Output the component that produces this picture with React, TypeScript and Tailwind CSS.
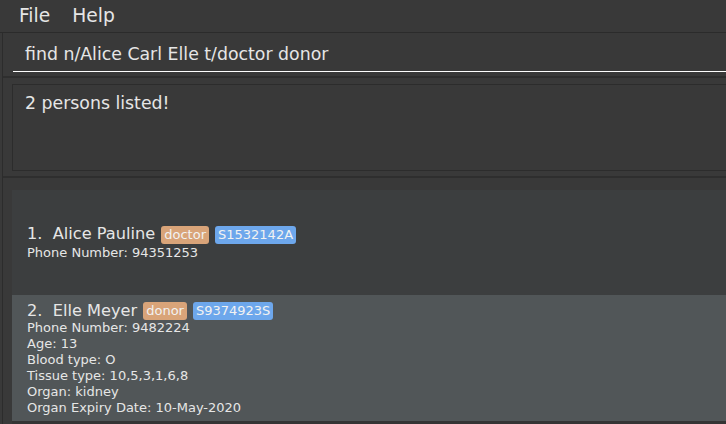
import React from "react";

const font = { fontFamily: '"DejaVu Sans", Verdana, sans-serif' };

function Tag({ text, color }: { text: string; color: "orange" | "blue" }) {
  return (
    <span
      className={
        "px-[3px] rounded-[3px] text-[13px] leading-[18px] text-[#f2f2f2] " +
        (color === "orange" ? "bg-[#d9a479]" : "bg-[#6da7ec]")
      }
    >
      {text}
    </span>
  );
}

export default function App() {
  return (
    <div
      className="w-[726px] h-[424px] overflow-hidden bg-[#393939] text-[#e6e6e6] flex flex-col"
      style={font}
    >
      {/* Menu bar */}
      <div className="h-[33px] shrink-0 flex items-center gap-[22px] px-[19px] text-[18.67px] border-b border-[#2b2b2b]">
        <span>File</span>
        <span>Help</span>
      </div>

      <div className="flex-1 flex flex-col ml-[2px] border-l border-[#2c2c2c]">
        {/* Command box */}
        <div className="h-[45px] shrink-0 pl-[10px] pt-[5px] border-b-[2px] border-[#2e2e2e]">
          <div className="h-[34px] border-b border-white flex items-center pl-[12px] text-[17.33px]">
            find n/Alice Carl Elle t/doctor donor
          </div>
        </div>

        {/* Result display */}
        <div className="h-[100px] shrink-0 pl-[9px] pt-[6px] pb-[6px] border-b-[2px] border-[#2e2e2e]">
          <div className="h-[87px] border border-[#2c2c2c] border-r-0 pl-[12px] pt-[6px] text-[17.33px]">
            2 persons listed!
          </div>
        </div>

        {/* Person list */}
        <div className="flex-1 pt-[12px] pl-[9px] bg-[#393939]">
          <div className="bg-[#343434] h-full">
            <div className="h-[105px] bg-[#3c3e3f] flex flex-col justify-center px-[15px] pt-[1px]">
              <div className="flex items-center gap-[6px] text-[16.2px] h-[18px]">
                <span className="whitespace-pre">1.  Alice Pauline</span>
                <Tag text="doctor" color="orange" />
                <Tag text="S1532142A" color="blue" />
              </div>
              <div className="text-[13px] leading-[16px] mt-[1px]">Phone Number: 94351253</div>
            </div>
            <div className="h-[126px] bg-[#515658] flex flex-col px-[15px] pt-[7px]">
              <div className="flex items-center gap-[6px] text-[16.2px] h-[18px]">
                <span className="whitespace-pre">2.  Elle Meyer</span>
                <Tag text="donor" color="orange" />
                <Tag text="S9374923S" color="blue" />
              </div>
              <div className="text-[13px] leading-[16px]">
                <div>Phone Number: 9482224</div>
                <div>Age: 13</div>
                <div>Blood type: O</div>
                <div>Tissue type: 10,5,3,1,6,8</div>
                <div>Organ: kidney</div>
                <div>Organ Expiry Date: 10-May-2020</div>
              </div>
            </div>
          </div>
        </div>
      </div>
    </div>
  );
}
